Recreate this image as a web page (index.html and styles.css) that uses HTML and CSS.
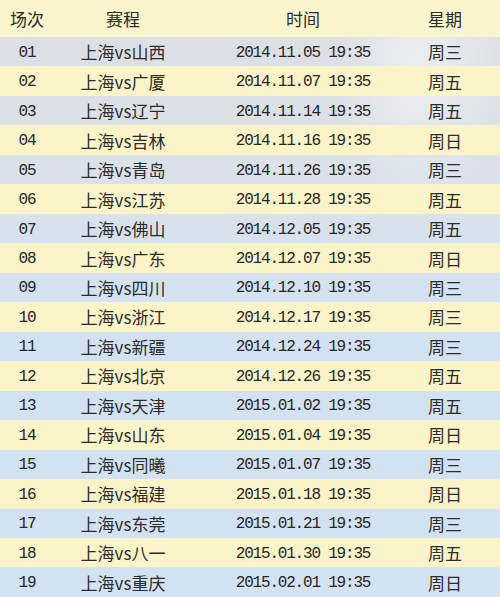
FILE: index.html
```html
<!DOCTYPE html>
<html lang="zh-CN">
<head>
<meta charset="utf-8">
<title>赛程表</title>
<link rel="stylesheet" href="styles.css">
</head>
<body>
<div class="table">
  <div class="row head"><div>场次</div><div>赛程</div><div>时间</div><div>星期</div></div>
  <div class="row"><div class="mono">01</div><div>上海vs山西</div><div class="mono">2014.11.05 19:35</div><div>周三</div></div>
  <div class="row"><div class="mono">02</div><div>上海vs广厦</div><div class="mono">2014.11.07 19:35</div><div>周五</div></div>
  <div class="row"><div class="mono">03</div><div>上海vs辽宁</div><div class="mono">2014.11.14 19:35</div><div>周五</div></div>
  <div class="row"><div class="mono">04</div><div>上海vs吉林</div><div class="mono">2014.11.16 19:35</div><div>周日</div></div>
  <div class="row"><div class="mono">05</div><div>上海vs青岛</div><div class="mono">2014.11.26 19:35</div><div>周三</div></div>
  <div class="row"><div class="mono">06</div><div>上海vs江苏</div><div class="mono">2014.11.28 19:35</div><div>周五</div></div>
  <div class="row"><div class="mono">07</div><div>上海vs佛山</div><div class="mono">2014.12.05 19:35</div><div>周五</div></div>
  <div class="row"><div class="mono">08</div><div>上海vs广东</div><div class="mono">2014.12.07 19:35</div><div>周日</div></div>
  <div class="row"><div class="mono">09</div><div>上海vs四川</div><div class="mono">2014.12.10 19:35</div><div>周三</div></div>
  <div class="row"><div class="mono">10</div><div>上海vs浙江</div><div class="mono">2014.12.17 19:35</div><div>周三</div></div>
  <div class="row"><div class="mono">11</div><div>上海vs新疆</div><div class="mono">2014.12.24 19:35</div><div>周三</div></div>
  <div class="row"><div class="mono">12</div><div>上海vs北京</div><div class="mono">2014.12.26 19:35</div><div>周五</div></div>
  <div class="row"><div class="mono">13</div><div>上海vs天津</div><div class="mono">2015.01.02 19:35</div><div>周五</div></div>
  <div class="row"><div class="mono">14</div><div>上海vs山东</div><div class="mono">2015.01.04 19:35</div><div>周日</div></div>
  <div class="row"><div class="mono">15</div><div>上海vs同曦</div><div class="mono">2015.01.07 19:35</div><div>周三</div></div>
  <div class="row"><div class="mono">16</div><div>上海vs福建</div><div class="mono">2015.01.18 19:35</div><div>周日</div></div>
  <div class="row"><div class="mono">17</div><div>上海vs东莞</div><div class="mono">2015.01.21 19:35</div><div>周三</div></div>
  <div class="row"><div class="mono">18</div><div>上海vs八一</div><div class="mono">2015.01.30 19:35</div><div>周五</div></div>
  <div class="row"><div class="mono">19</div><div>上海vs重庆</div><div class="mono">2015.02.01 19:35</div><div>周日</div></div>
</div>
</body>
</html>
```
FILE: styles.css
```css
html, body {
  margin: 0;
  padding: 0;
  overflow: hidden;
}
body {
  width: 500px;
  height: 597px;
  font-family: "Noto Sans CJK SC", "Noto Sans", sans-serif;
  font-size: 17px;
  color: #2b2b2b;
}
.table {
  display: flex;
  flex-direction: column;
  background:
    radial-gradient(ellipse 120px 200px at 420px 60px, rgba(255,255,255,0.45), rgba(255,255,255,0) 70%),
    linear-gradient(to bottom, #dcdfe4 0px, #dde2e8 150px, #d6e2ef 250px, #d3e2f3 330px, #d3e3f4 597px);
}
.row {
  display: grid;
  grid-template-columns: 54px 138px 222px 62px 1fr;
  align-items: center;
  height: 29.47px;
  text-align: center;
  line-height: 1;
}
.row.head {
  height: 37px;
  background: #fbf5cf;
}
.row:nth-child(odd) {
  background-color: #fbf4c9;
}
.row.head {
  background-color: #fbf5cf;
}
.mono {
  font-family: "Liberation Mono", monospace;
  font-size: 16px;
  letter-spacing: -1.2px;
  padding-top: 2px;
  color: #262626;
}
```
